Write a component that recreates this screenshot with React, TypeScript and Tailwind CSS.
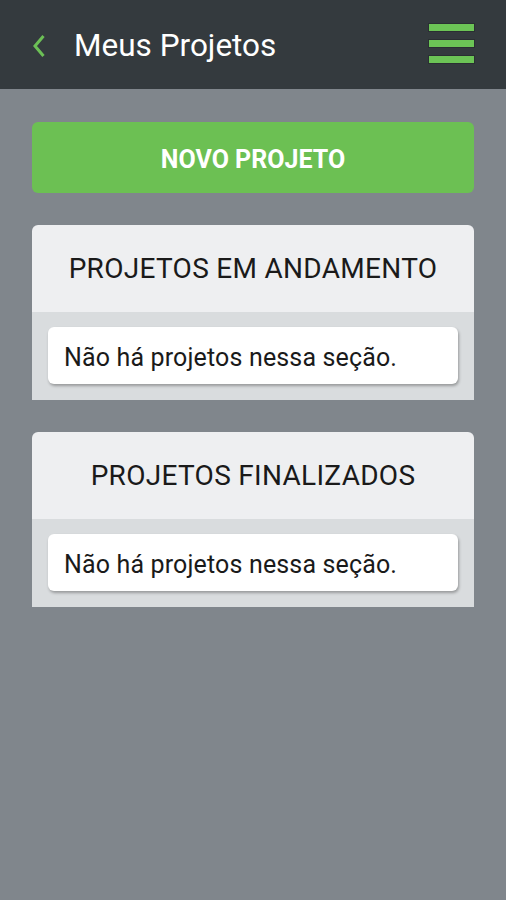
import React from "react";

const Section: React.FC<{ title: string }> = ({ title }) => {
  return (
    <div className="rounded-t-md overflow-hidden">
      <div className="bg-[#eeeff1] h-[87px] flex items-center justify-center">
        <h2 className="text-[28px] leading-none tracking-[0.3px] text-[#1a1a1a] pt-[1px]">{title}</h2>
      </div>
      <div className="bg-[#d9dcde] px-4 pt-[15px] pb-4">
        <div className="bg-white rounded-md h-[57px] flex items-center px-4 shadow-[1px_2px_3px_rgba(0,0,0,0.3)]">
          <p className="text-[25px] leading-none tracking-[0.15px] text-[#1a1a1a] pt-[3px]">Não há projetos nessa seção.</p>
        </div>
      </div>
    </div>
  );
};

export default function App() {
  return (
    <div
      className="w-[506px] h-[900px] bg-[#80868c] flex flex-col"
      style={{ fontFamily: "Roboto, 'Liberation Sans', sans-serif" }}
    >
      <header className="h-[89px] bg-[#343a3e] flex items-center pl-[32px] pr-[31px]">
        <svg width="14" height="24" viewBox="0 0 14 24" className="shrink-0 mt-[2px]">
          <path d="M11.5 2 L3 12 L11.5 22" fill="none" stroke="#6cbf56" strokeWidth="3" />
        </svg>
        <h1 className="ml-[28px] text-[31.5px] leading-none text-white flex-1 pt-[2px]">Meus Projetos</h1>
        <div className="flex flex-col gap-[7px] mb-[2px]">
          <span className="block w-[47px] h-[9px] bg-[#6cc456] border border-[#2a2f32]" />
          <span className="block w-[47px] h-[9px] bg-[#6cc456] border border-[#2a2f32]" />
          <span className="block w-[47px] h-[9px] bg-[#6cc456] border border-[#2a2f32]" />
        </div>
      </header>
      <main className="px-[32px] pt-[33px] flex flex-col gap-[32px] w-full">
        <button className="h-[71px] w-full bg-[#6cc053] rounded-md text-white text-[25px] leading-none font-bold pt-[4px]">
          NOVO PROJETO
        </button>
        <Section title="PROJETOS EM ANDAMENTO" />
        <Section title="PROJETOS FINALIZADOS" />
      </main>
    </div>
  );
}
